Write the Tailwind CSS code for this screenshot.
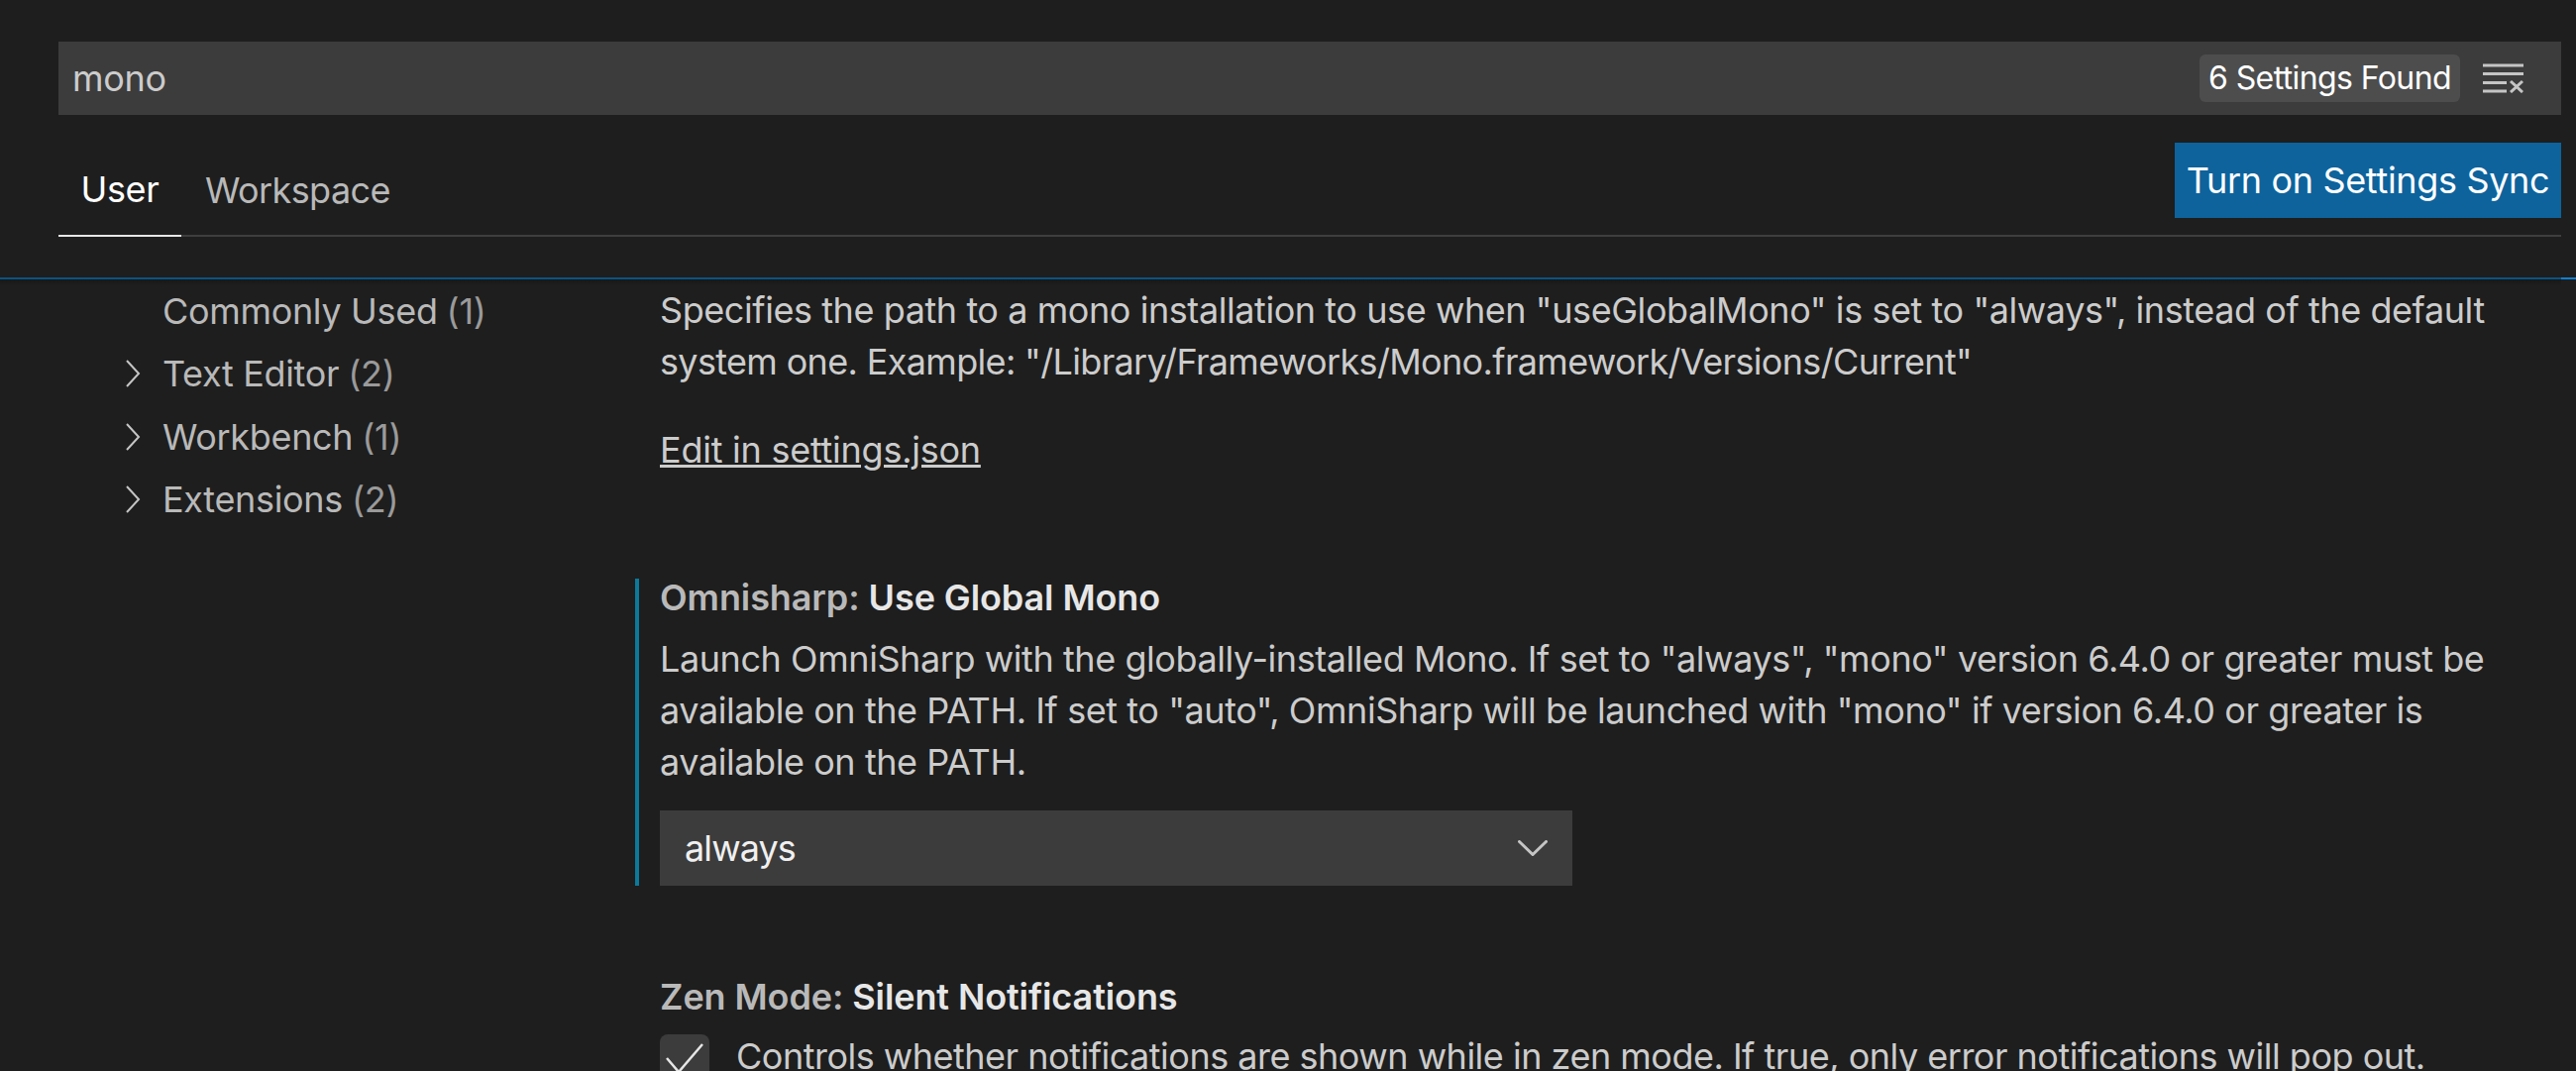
<!DOCTYPE html>
<html lang="en">
<head>
    <meta charset="UTF-8">
    <title>Settings</title>
    <script src="https://cdn.jsdelivr.net/npm/@tailwindcss/browser@4"></script>
</head>
<body class="bg-[#1e1e1e] text-[#cccccc] font-['Inter',sans-serif] text-[36px] tracking-[-0.33px] h-[1081px] overflow-hidden">
    <!-- header -->
    <div class="h-[280px] pt-[42px] pl-[59px] pr-[15px]">
        <div class="h-[74px] bg-[#3c3c3c] flex items-center pl-[14px] pr-[38px]">
            <span class="flex-1 text-[#cccccc]">mono</span>
            <span class="h-[48px] flex items-center px-[9px] rounded-[6px] bg-[#4d4d4d] text-[#ffffff] text-[32px] tracking-[-0.6px]">6 Settings Found</span>
            <svg class="ml-[23px]" width="41" height="30" viewBox="0 0 41 30" fill="none" stroke="#c5c5c5" stroke-width="3">
                <path d="M0 2h41M0 10.500h41M0 19.500h24M0 28h24M28 18l12 11M40 18l-12 11"/>
            </svg>
        </div>
        <div class="relative h-[123px] flex items-start border-b-2 border-[#3e3e3e]">
            <div class="h-[123px] w-[124px] border-b-2 border-[#e7e7e7] text-white flex items-center justify-center pt-[28px]">User</div>
            <div class="h-[123px] ml-[24px] flex items-center pt-[28px] text-[#b9b9b9] tracking-[-0.6px]">Workspace</div>
            <button class="absolute right-0 top-[28px] h-[76px] w-[390px] bg-[#0e639c] text-white flex items-center justify-center">Turn on Settings Sync</button>
        </div>
    </div>

    <!-- scroll shadow line -->
    <div class="relative flex h-[2px]">
        <div class="flex-1 bg-[#0b5384]"></div>
        <div class="w-[15px] bg-[#0e7fd2]"></div>
        <div class="absolute left-0 right-[15px] top-[2px] h-[6px] bg-gradient-to-b from-[#171717] to-[#1e1e1e]"></div>
    </div>

    <div class="flex">
        <!-- tree -->
        <div class="w-[641px] shrink-0 text-[#b9b9b9]">
            <div class="h-[63.5px] pl-[164px] flex items-center">Commonly Used <span class="ml-[9px] text-[#9a9a9a]">(1)</span></div>
            <div class="h-[63.5px] pl-[126px] flex items-center">
                <svg class="mr-[22px]" width="16" height="28" viewBox="0 0 16 28" fill="none" stroke="#c5c5c5" stroke-width="2"><path d="M2 1l12 13L2 27"/></svg>
                Text Editor <span class="ml-[9px] text-[#9a9a9a]">(2)</span>
            </div>
            <div class="h-[63.5px] pl-[126px] flex items-center">
                <svg class="mr-[22px]" width="16" height="28" viewBox="0 0 16 28" fill="none" stroke="#c5c5c5" stroke-width="2"><path d="M2 1l12 13L2 27"/></svg>
                Workbench <span class="ml-[9px] text-[#9a9a9a]">(1)</span>
            </div>
            <div class="h-[63.5px] pl-[126px] flex items-center">
                <svg class="mr-[22px]" width="16" height="28" viewBox="0 0 16 28" fill="none" stroke="#c5c5c5" stroke-width="2"><path d="M2 1l12 13L2 27"/></svg>
                Extensions <span class="ml-[9px] text-[#9a9a9a]">(2)</span>
            </div>
        </div>

        <!-- settings list -->
        <div class="flex-1 leading-[52px] whitespace-nowrap">
            <div class="pl-[25px] pt-[5px]">
                <p class="tracking-[-0.43px]">Specifies the path to a mono installation to use when "useGlobalMono" is set to "always", instead of the default<br><span class="tracking-[-0.66px]">system one. Example: "/Library/Frameworks/Mono.framework/Versions/Current"</span></p>
                <a class="block mt-[37px] underline tracking-[-0.25px]">Edit in settings.json</a>
            </div>
            <div class="mt-[104px] pl-[21px] border-l-[4px] border-[#0b7a9b]">
                <div class="font-semibold leading-[38px] tracking-[-0.1px]"><span class="text-[#b9b9b9]">Omnisharp: </span><span class="text-[#e7e7e7]">Use Global Mono</span></div>
                <p class="mt-[17px] tracking-[-0.43px]">Launch OmniSharp with the globally-installed Mono. If set to "always", "mono" version 6.4.0 or greater must be<br>available on the PATH. If set to "auto", OmniSharp will be launched with "mono" if version 6.4.0 or greater is<br>available on the PATH.</p>
                <div class="mt-[23px] w-[921px] h-[76px] bg-[#3c3c3c] flex items-center justify-between pl-[25px] pr-[25px] text-[#f0f0f0]">
                    <span class="tracking-[-0.9px]">always</span>
                    <svg width="30" height="16" viewBox="0 0 30 16" fill="none" stroke="#c5c5c5" stroke-width="3" stroke-linecap="round"><path d="M1.500 1.500L15 14.500L28.500 1.500"/></svg>
                </div>
            </div>
            <div class="mt-[93px] pl-[25px]">
                <div class="font-semibold leading-[38px] tracking-[-0.1px]"><span class="text-[#b9b9b9]">Zen Mode: </span><span class="text-[#e7e7e7]">Silent Notifications</span></div>
                <div class="flex mt-[19px]">
                    <div class="w-[50px] h-[52px] shrink-0 bg-[#3c3c3c] rounded-[8px]">
                        <svg width="50" height="52" viewBox="0 0 50 52" fill="none" stroke="#e6e6e6" stroke-width="2.500"><path d="M7 24l12 14L43 10"/></svg>
                    </div>
                    <p class="ml-[27px] -mt-[4px] tracking-[-0.5px]">Controls whether notifications are shown while in zen mode. If true, only error notifications will pop out.</p>
                </div>
            </div>
        </div>
    </div>
</body>
</html>
